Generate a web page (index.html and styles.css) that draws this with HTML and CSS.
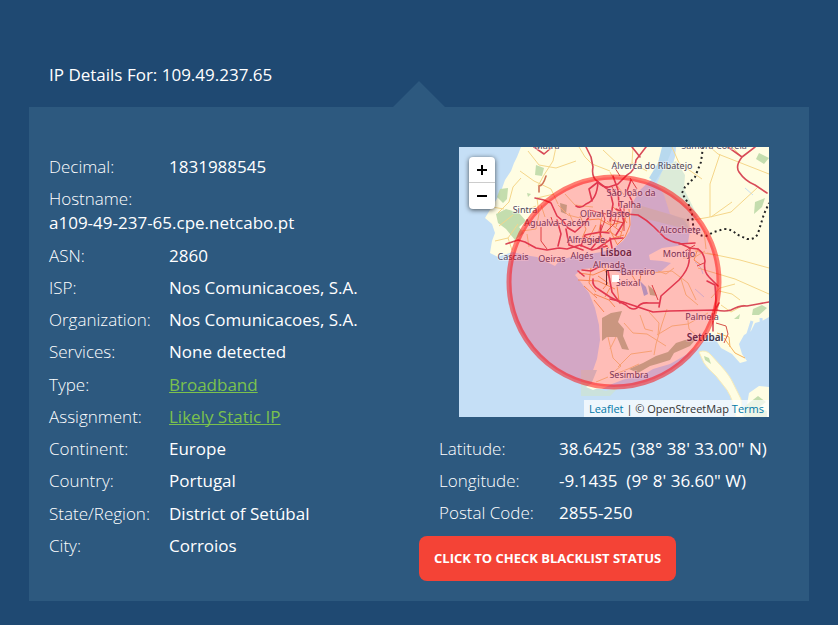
FILE: index.html
```html
<!DOCTYPE html>
<html lang="en">
<head>
<meta charset="utf-8">
<meta name="viewport" content="width=device-width, initial-scale=1">
<title>IP Details</title>
<link rel="stylesheet" href="styles.css">
</head>
<body>
<main class="page">
  <h1 class="title">IP Details For: 109.49.237.65</h1>
  <section class="panel">
    <dl class="column details">
      <div class="row"><dt>Decimal:</dt><dd>1831988545</dd></div>
      <div class="row row-stacked"><dt>Hostname:</dt><dd>a109-49-237-65.cpe.netcabo.pt</dd></div>
      <div class="row"><dt>ASN:</dt><dd>2860</dd></div>
      <div class="row"><dt>ISP:</dt><dd>Nos Comunicacoes, S.A.</dd></div>
      <div class="row"><dt>Organization:</dt><dd>Nos Comunicacoes, S.A.</dd></div>
      <div class="row"><dt>Services:</dt><dd>None detected</dd></div>
      <div class="row"><dt>Type:</dt><dd><a href="#broadband">Broadband</a></dd></div>
      <div class="row"><dt>Assignment:</dt><dd><a href="#static">Likely Static IP</a></dd></div>
      <div class="row"><dt>Continent:</dt><dd>Europe</dd></div>
      <div class="row"><dt>Country:</dt><dd>Portugal</dd></div>
      <div class="row"><dt>State/Region:</dt><dd>District of Setúbal</dd></div>
      <div class="row"><dt>City:</dt><dd>Corroios</dd></div>
    </dl>
    <div class="column location">
      <div class="map">
        <svg class="map-tiles" viewBox="0 0 310 270" preserveAspectRatio="xMidYMid slice" role="img" aria-label="Map of Lisbon and Setúbal">
          <rect width="310" height="270" fill="#c5dff6"/>
          <!-- north bank -->
          <path fill="#fffde3" d="M62 0L58 10 55 16 52 24 46 33 41 47 34 58 26 71 33 77 36 86 33 94 31 106 39 110 44 108 54 105 65 108 78 110 88 115 96 119 101 113 112 110 129 107 143 105 155 101 164 94 171 84 172 68 174 55 181 43 194 31 201 10 206 0Z"/>
          <!-- south bank and the east -->
          <path fill="#fffde3" d="M217 0H310V170L303 174 296 176 292 184 285 188 280 197 283 207 288 214 281 216 273 207 262 201 255 190 248 188 240 199 225 209 211 217 194 222 184 228 166 232 153 237 143 242 128 241 126 237 133 226 138 212 141 193 140 178 136 161 130 146 121 134 116 128 123 122 137 121 150 117 154 123 164 127 174 123 181 126 190 122 200 126 212 116 203 114 191 113 190 108 203 101 218 99 229 96 231 83 226 74 217 65 206 48 207 35 212 23 216 10Z"/>
          <!-- Troia sandbank and the estuary shore -->
          <path fill="#fffde3" stroke="#f8ecb9" stroke-linejoin="round" d="M240 205Q247 202 252 208L262 219Q271 229 274 236L282 252 284 270H277Q275 254 268 243L257 229Q249 222 245 216Z"/>
          <path fill="#fffde3" d="M310 240L300 239 290 246 288 258 292 270H310Z"/>
          <path fill="none" stroke="#c5dff6" stroke-width="3" d="M293 174L288 190M302 171L303 187 308 190M294 194L310 200"/>
          <path fill="none" stroke="#c5dff6" d="M236 115L242 121 244 127M236 142L245 150M286 41L294 48"/>
          <!-- tidal flats -->
          <path fill="#dcebd8" d="M205 20L217 14 226 28 225 42 231 54 239 70 228 74 211 67 205 48 198 36Z"/>
          <path fill="#b8d9ee" d="M203 0H214L207 18 196 35 190 31 199 16Z"/>
          <path fill="#c4dcc6" opacity=".7" d="M176 57L230 73 231 83 172 68Z"/>
          <path fill="#cbe2dc" d="M122 223H138L131 240 147 244 161 239 151 249H122Z"/>
          <path fill="#fffde3" d="M127 240L132 237 142 240 134 243Z"/>
          <!-- woodland -->
          <g fill="#c4ddae">
            <path d="M41 42L49 41 48 52 44 56 38 50Z"/>
            <path d="M77 18L85 21 83 29 76 28Z"/>
            <path d="M37 67L47 62 60 66 67 74 60 80 65 86 56 93 47 82 39 76Z"/>
            <path d="M300 6L310 11 305 17 297 12Z"/>
            <path d="M296 55L306 51 303 60 295 67Z"/>
            <path d="M294 162L303 158 308 161 300 168 293 168Z"/>
            <path d="M275 172L281 167 280 172Z"/>
            <path d="M245 209L250 211 252 217 246 213Z"/>
            <path d="M286 259L299 249 307 255 299 261 308 264V270H285Z"/>
            <path d="M68 46L72 47 69 50Z"/>
          </g>
          <!-- scrub and hills -->
          <g fill="#b9c89a">
            <path d="M143 171L152 166 163 164 159 175 165 182 164 189 170 203 163 202 158 190 148 190 143 194Z"/>
            <path d="M170 222L184 216 197 209 209 205 217 196 226 193 239 190 231 199 215 206 211 213 198 217 191 219 179 226Z"/>
            <path d="M101 56L108 58 107 67 102 65Z"/>
          </g>
          <path fill="#9fc0e4" d="M181 134L187 140 189 147 185 149Z"/>
          <path fill="#b9c89a" d="M189 138L196 144 198 149 191 148Z"/>
          <!-- dense streets -->
          <g fill="none" stroke="#f6b35d" stroke-width="1" stroke-linejoin="round">
            <path d="M127 73L140 72 151 78 164 75M134 87L150 84 160 91M143 69L140 84 147 99M153 65L151 83 158 97M161 66L157 80M168 66L161 91M125 96L139 92 150 101M148 74L162 85M137 78L130 91M121 69L127 82 122 94M151 92L165 88"/>
            <path d="M170 62L171 78 166 90 158 98M154 60L162 67 168 76"/>
            <path d="M120 126L134 128 148 122M132 121L130 136 137 145M139 129L149 136 144 142M144 120L151 132M119 133L139 134 156 142M125 139L138 151"/>
            <path d="M135 147L150 153 156 160M146 150L151 141M158 139L160 154M135 153L145 165M182 126L181 134M171 125L179 138"/>
            <path d="M265 191L276 206 286 211M258 186L270 190 271 200M239 101L235 113 242 118"/>
          </g>
          <g fill="none" stroke="#f5d68a" stroke-width="1" stroke-linejoin="round">
            <path d="M61 24L75 34 92 42 99 57M39 66L50 55 54 40 62 31M69 4L80 18 97 21 117 14M97 0L94 14 85 28 79 39M36 94L49 91 59 77M49 91L53 103M63 84L77 82 80 67M80 67L78 51 95 47M99 58L109 68 121 71M106 47L116 58 134 60M110 66L115 77M70 100L68 87M86 70L82 58M120 0L126 10 133 17 151 24M144 3L162 20 174 16M151 25L157 37 165 48M174 0L173 16 188 24M65 64L77 59M54 68L40 79M33 60L45 62"/>
            <path d="M261 7L251 37 251 70 234 73M251 70L272 65 298 41M310 121L281 113 248 106M213 0L220 16 243 32M251 0L259 7 310 27M273 0L281 8M245 84L247 102M252 70L273 55"/>
            <path d="M239 121L276 132 310 147M181 127L213 124 229 136 237 153M239 158L227 148 222 132"/>
            <path d="M149 190L154 211 162 219 151 228M157 190L151 202M165 176L174 186 188 187 207 199M181 168L186 182 194 184M208 162L203 177 197 197 195 208M198 188L213 179 229 177 249 166M228 167L230 182 239 190M149 230L137 235M151 229L169 222 180 217M159 220L172 207 193 204M190 165L200 176 199 188M260 144L273 147 281 153M252 151L261 141 276 137M262 158L272 165 285 158M199 124L207 127 215 121M224 111L236 110 246 104M236 104L255 108"/>
          </g>
          <!-- main roads -->
          <g fill="none" stroke="#d84b58" stroke-width="1.6" stroke-linejoin="round" stroke-linecap="round">
            <path d="M47 97L59 93 66 95 77 101 88 103 100 101 108 102 121 98 133 103 148 99"/>
            <path d="M76 51L85 53 92 56 98 69 104 74 109 81 116 85 126 76 130 70"/>
            <path d="M127 0L132 10 134 20Q132 30 139 35Q144 41 150 40L159 37 168 28Q176 24 177 13L187 0"/>
            <path d="M139 35L151 44 154 57 151 74M139 35L130 42 133 54M154 29L159 43 160 59M172 33L168 44 174 56"/>
            <path d="M157 62L167 67 179 68Q188 73 195 80L206 91Q212 95 220 96L231 101 239 102Q245 106 246 114Q244 124 250 130L259 139"/>
            <path d="M231 101L230 115Q229 123 220 133L202 149 200 160M220 97L236 96"/>
            <path d="M134 132Q133 139 139 142L151 150 167 158Q173 164 178 161Q181 155 190 156H200"/>
            <path d="M151 152L164 155 176 159 194 165 210 164 257 163Q266 165 272 163Q281 158 288 159L299 157 310 155"/>
            <path d="M248 134L256 138 257 153 256 163 254 172 254 184M256 163L260 156M269 0L283 10 296 0M283 10Q276 19 280 25Q286 34 296 38L308 46"/>
            <path d="M98 73L102 87 99 99M107 82L110 98 124 103M122 99L126 88 141 85 150 86M132 102L141 91 142 78M161 61L165 75 157 88M173 0L181 10M75 0L85 7 92 1"/>
            <path d="M117 59Q122 62 127 57Q138 53 139 35M139 101L152 92 164 91M153 101L151 91M123 123L132 124 140 120M119 124L125 129M149 124L153 145 161 156"/>
            <path stroke="#cf7356" d="M80 45L80 39Q84 39 87 29"/>
          </g>
          <g fill="none" stroke="#d65349" stroke-width="1">
            <path d="M82 80L82 94 88 102M92 70L95 79M143 63L146 73 141 86M153 73L165 76M125 89L134 94 148 93M158 65L155 77 148 84M161 29L156 21M171 31L178 42M153 40L158 49M257 176L267 179 269 187 265 196M226 104L236 98M238 119L245 116M193 138L199 153M130 63L147 67M165 58V84"/>
          </g>
          <g fill="none" stroke="#252525" stroke-width="2" stroke-dasharray="2 3" stroke-linejoin="round">
            <path d="M244 0L242 15 236 30 226 40 223 46 229 56 233 67 234 77Q235 89 247 89L255 85 265 82Q273 82 277 87L288 92Q298 93 300 83L305 67 310 56"/>
            <path d="M228 73L234 72"/>
          </g>
          <!-- marker -->
          <path fill="none" stroke="#333" d="M161 123.500H147.500V138"/>
          <g class="places">
            <text x="255" y="2">Samora Correia</text>
            <text x="193" y="22">Alverca do Ribatejo</text>
            <text x="172" y="49">São João da</text>
            <text x="171" y="61">Talha</text>
            <text x="146" y="70">Olival Basto</text>
            <text x="66" y="66">Sintra</text>
            <text x="98" y="79">Agualva-Cacém</text>
            <text x="127" y="96">Alfragide</text>
            <text x="54" y="113">Cascais</text>
            <text x="93" y="115">Oeiras</text>
            <text x="123" y="112">Algés</text>
            <text class="city" x="157" y="109">Lisboa</text>
            <text x="150" y="121">Almada</text>
            <text x="179" y="128">Barreiro</text>
            <text x="169" y="139">Seixal</text>
            <text x="221" y="86">Alcochete</text>
            <text x="220" y="110">Montijo</text>
            <text x="243" y="173">Palmela</text>
            <text class="city" x="246" y="194">Setúbal</text>
            <text x="170" y="231">Sesimbra</text>
            <text x="88" y="2">Mafra</text>
          </g>
          <circle cx="155" cy="135" r="105" fill="#f03" fill-opacity=".25" stroke="#f00" stroke-opacity=".5" stroke-width="5"/>
          <rect x="153" y="128" width="7" height="7" fill="#fff"/>
        </svg>
        <div class="zoom">
          <button type="button" aria-label="Zoom in"><svg viewBox="0 0 12 12" aria-hidden="true"><path d="M6 1V11M1 6H11"/></svg></button>
          <button type="button" aria-label="Zoom out"><svg viewBox="0 0 12 12" aria-hidden="true"><path d="M1 6H11"/></svg></button>
        </div>
        <p class="attribution"><a href="#leaflet">Leaflet</a> | © OpenStreetMap <a href="#terms">Terms</a></p>
      </div>
      <dl class="coordinates">
        <div class="row"><dt>Latitude:</dt><dd>38.6425&nbsp; (38° 38' 33.00" N)</dd></div>
        <div class="row"><dt>Longitude:</dt><dd>-9.1435&nbsp; (9° 8' 36.60" W)</dd></div>
        <div class="row"><dt>Postal Code:</dt><dd>2855-250</dd></div>
      </dl>
      <button type="button" class="check">CLICK TO CHECK BLACKLIST STATUS</button>
    </div>
  </section>
</main>
</body>
</html>
```
FILE: styles.css
```css
* { box-sizing: border-box; }

body {
  margin: 0;
  min-height: 100vh;
  background: #1f4972;
  color: #fff;
  font: 17px/24px "Open Sans", "Noto Sans", sans-serif;
}

.page {
  max-width: 1200px;
  margin: 0 auto;
  padding: 63px 29px 24px;
}

.title {
  margin: 0 20px 20px;
  font-size: 17px;
  line-height: 24px;
  font-weight: 400;
}

.panel {
  position: relative;
  display: grid;
  grid-template-columns: 1fr 1fr;
  padding: 40px 0 20px;
  background: #2d597f;
}

.panel::before {
  content: "";
  position: absolute;
  bottom: 100%;
  left: 50%;
  margin-left: -26px;
  border: 26px solid transparent;
  border-top: 0;
  border-bottom-color: #2d597f;
}

dl, dd { margin: 0; }

.column {
  display: flex;
  flex-direction: column;
}

.details {
  justify-content: space-between;
  padding: 8px 20px 23px;
}

.row { display: flex; }
.row dt { flex: 0 0 120px; font-weight: 300; }
.row-stacked { display: block; }
.row a { color: #7bc14d; text-decoration-skip-ink: none; }

.map {
  position: relative;
  height: 270px;
  margin: 0 40px;
  overflow: hidden;
}

.map-tiles {
  display: block;
  width: 100%;
  height: 100%;
}

.places {
  font: 9px "Noto Sans", sans-serif;
  fill: #50475c;
  text-anchor: middle;
  stroke: rgba(255, 255, 255, 0.4);
  stroke-width: 2px;
  paint-order: stroke;
}

.city { font-size: 10px; font-weight: 600; fill: #40364a; }

.zoom {
  position: absolute;
  top: 10px;
  left: 10px;
  width: 26px;
  border-radius: 4px;
  background: #fff;
  box-shadow: 0 1px 5px rgba(0, 0, 0, 0.65);
}

.zoom button {
  display: flex;
  align-items: center;
  justify-content: center;
  width: 26px;
  height: 26px;
  padding: 0;
  border: 0;
  background: none;
}

.zoom button:first-child { border-bottom: 1px solid #ccc; }
.zoom svg { width: 12px; height: 12px; fill: none; stroke: #000; stroke-width: 2px; }

.attribution {
  position: absolute;
  right: 0;
  bottom: 0;
  margin: 0;
  padding: 0 5px;
  background: rgba(255, 255, 255, 0.7);
  color: #333;
  font-size: 11px;
  line-height: 17px;
  white-space: nowrap;
}

.attribution a { color: #0078a8; text-decoration: none; }

.coordinates {
  display: grid;
  gap: 8px;
  padding: 20px 20px 11px;
}

.check {
  align-self: flex-start;
  padding: 10px 15px;
  border: 0;
  border-radius: 8px;
  background: #f44336;
  color: #fff;
  font: 700 13px/25px "Open Sans", sans-serif;
}

@media (max-width: 700px) {
  .panel { grid-template-columns: 1fr; }
  .details { gap: 8px; }
}
```
